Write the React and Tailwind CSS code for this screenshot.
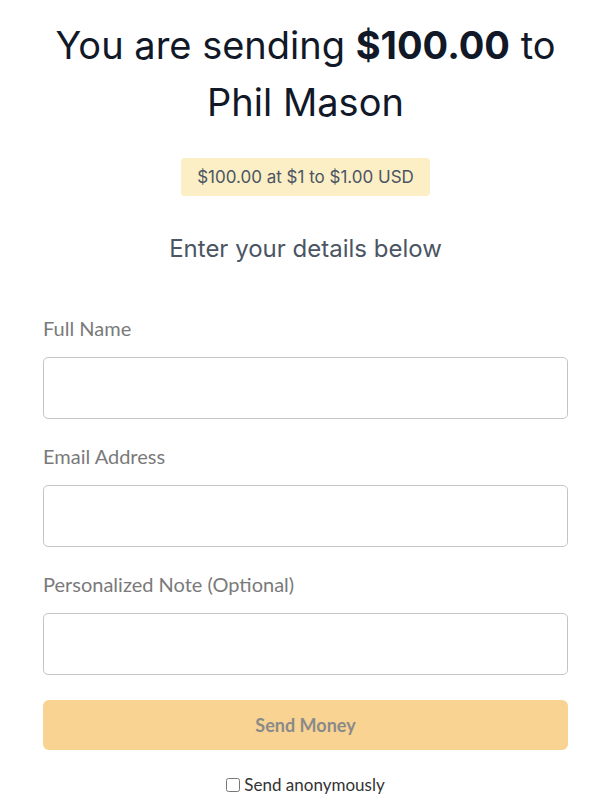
export default function App() {
  const fields = ['Full Name', 'Email Address', 'Personalized Note (Optional)'];
  return (
    <div className="min-h-[801px] bg-white pl-[43px] pr-[40px] font-['Inter',sans-serif]">
      <h1 className="pt-[17px] text-center text-[38px] leading-[57px] text-[#111827]">
        You are sending <span className="font-bold">$100.00</span> to Phil Mason
      </h1>
      <div className="mt-[27px] flex justify-center">
        <span className="rounded-[4px] bg-[#fcefc5] px-[16px] py-[8px] text-[17px] leading-[22px] text-[#4b5563]">
          $100.00 at $1 to $1.00 USD
        </span>
      </div>
      <p className="mt-[37px] text-center text-[24px] leading-[32px] text-[#4b5563]">
        Enter your details below
      </p>

      <form className="mt-[51px] font-['Lato',sans-serif]">
        {fields.map((label) => (
          <div key={label} className="mb-[25px]">
            <label className="block text-[20px] leading-[24px] text-[#7a7a7a]">{label}</label>
            <input
              type="text"
              className="mt-[17px] block h-[62px] w-full rounded-[5px] border border-[#c4c4c4] bg-white px-3"
            />
          </div>
        ))}
        <button
          type="button"
          className="mt-[1px] block h-[50px] w-full rounded-[6px] bg-[#f9d391] text-[18px] font-bold text-[#8a8a8a]"
        >
          Send Money
        </button>
        <div className="mt-[22px] flex items-center justify-center gap-[4px] text-[17px] text-[#333]">
          <input type="checkbox" className="h-[14px] w-[14px]" />
          <span>Send anonymously</span>
        </div>
      </form>
    </div>
  );
}
